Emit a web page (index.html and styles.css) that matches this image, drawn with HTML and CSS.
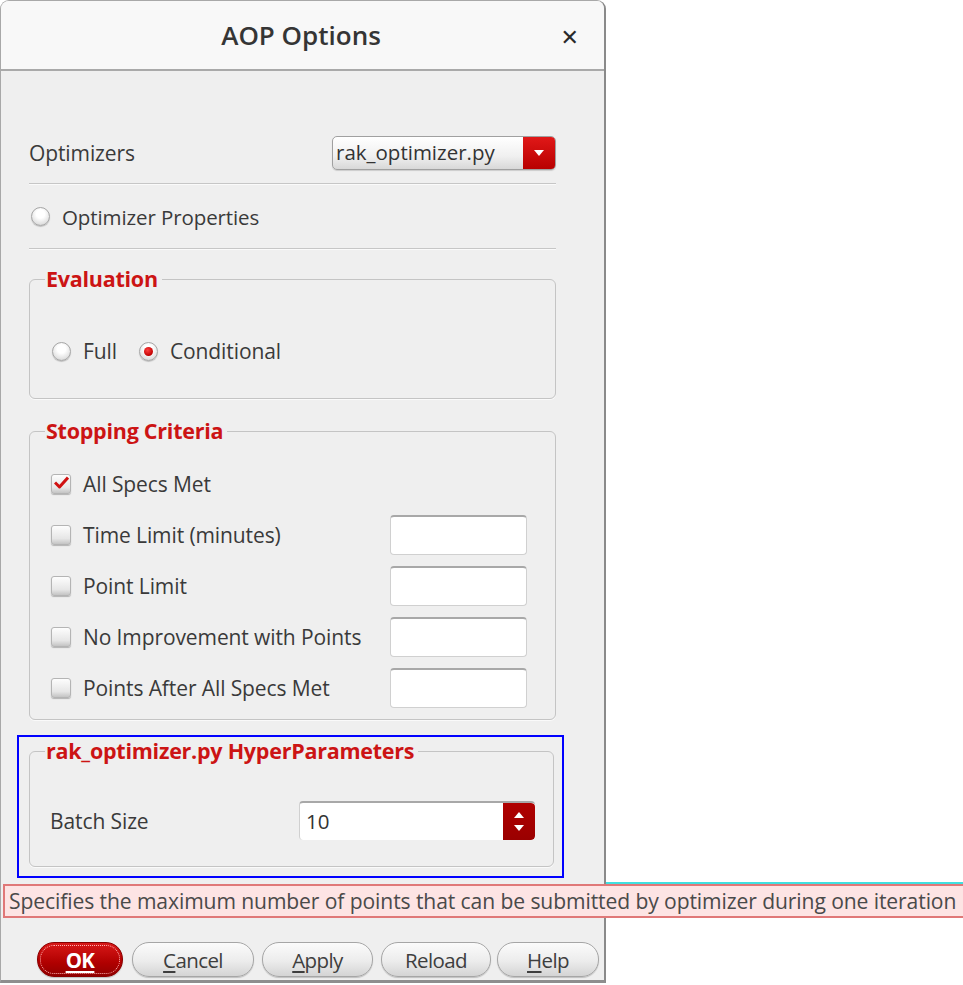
FILE: index.html
```html
<!DOCTYPE html>
<html>
<head>
<meta charset="utf-8">
<link rel="stylesheet" href="styles.css">
</head>
<body>
<div class="dialog">
  <div class="titlebar">
    <span class="title">AOP Options</span>
    <span class="close">&#x2715;</span>
  </div>
  <div class="content">
    <div class="row opt-row">
      <span class="label">Optimizers</span>
      <div class="combo">
        <span class="combo-text">rak_optimizer.py</span>
        <span class="combo-btn"><svg width="10" height="6" viewBox="0 0 10 6"><path d="M0 0 H10 L5 6 Z" fill="#fff"/></svg></span>
      </div>
    </div>
    <div class="sep sep1"></div>
    <div class="row prop-row">
      <span class="radio"></span>
      <span class="label">Optimizer Properties</span>
    </div>
    <div class="sep"></div>

    <fieldset class="group eval">
      <legend>Evaluation</legend>
      <div class="radios">
        <span class="radio"></span><span class="label">Full</span>
        <span class="radio checked"></span><span class="label">Conditional</span>
      </div>
    </fieldset>

    <fieldset class="group stop">
      <legend>Stopping Criteria</legend>
      <div class="crit">
        <span class="check checked"><svg width="15" height="13" viewBox="0 0 15 13"><path d="M1 6.5 L5.5 11 L14 1.5" fill="none" stroke="#d01010" stroke-width="3" stroke-linejoin="round"/></svg></span>
        <span class="label">All Specs Met</span>
      </div>
      <div class="crit">
        <span class="check"></span>
        <span class="label">Time Limit (minutes)</span>
        <span class="field"></span>
      </div>
      <div class="crit">
        <span class="check"></span>
        <span class="label">Point Limit</span>
        <span class="field"></span>
      </div>
      <div class="crit">
        <span class="check"></span>
        <span class="label">No Improvement with Points</span>
        <span class="field"></span>
      </div>
      <div class="crit">
        <span class="check"></span>
        <span class="label">Points After All Specs Met</span>
        <span class="field"></span>
      </div>
    </fieldset>

    <div class="highlight">
      <fieldset class="group hyper">
        <legend>rak_optimizer.py HyperParameters</legend>
        <div class="batch">
          <span class="label">Batch Size</span>
          <div class="spin">
            <span class="spin-text">10</span>
            <span class="spin-btn">
              <svg width="10" height="6" viewBox="0 0 10 6"><path d="M0 6 H10 L5 0 Z" fill="#fff"/></svg>
              <svg width="10" height="6" viewBox="0 0 10 6"><path d="M0 0 H10 L5 6 Z" fill="#fff"/></svg>
            </span>
          </div>
        </div>
      </fieldset>
    </div>

    <div class="buttons">
      <span class="btn ok"><u>OK</u></span>
      <span class="btn btn-cancel"><u>C</u>ancel</span>
      <span class="btn btn-apply"><u>A</u>pply</span>
      <span class="btn btn-reload">Reload</span>
      <span class="btn btn-help"><u>H</u>elp</span>
    </div>
  </div>
</div>
<div class="tooltip-edge"></div>
<div class="tooltip">Specifies the maximum number of points that can be submitted by optimizer during one iteration</div>
</body>
</html>
```

FILE: styles.css
```css
* { box-sizing: border-box; }
html, body { margin: 0; padding: 0; background: #ffffff; }
body {
  font-family: "Open Sans", "DejaVu Sans", sans-serif;
  color: #3a3a3a;
  width: 963px;
  height: 985px;
  overflow: hidden;
  position: relative;
}
.dialog {
  width: 606px;
  height: 983px;
  background: #efefef;
  border: 1px solid #a8a8a8;
  border-right: 2px solid #8a8a8a;
  border-bottom: 3px solid #8e8e8e;
  border-radius: 9px 9px 0 0;
  overflow: hidden;
}
.titlebar {
  height: 70px;
  background: #f8f8f8;
  border-bottom: 2px solid #a9a9a9;
  display: flex;
  align-items: center;
  justify-content: center;
  position: relative;
}
.title {
  font-size: 26px;
  font-weight: 600;
  color: #353535;
  margin-top: -1px;
  margin-left: -3px;
  letter-spacing: 0;
}
.close {
  position: absolute;
  right: 25px;
  top: 20px;
  font-size: 22px;
  font-weight: 700;
  color: #2a2a2a;
}
.content {
  padding: 65px 48px 0 28px;
}
.label {
  font-size: 21px;
  color: #3a3a3a;
  white-space: nowrap;
  letter-spacing: -0.1px;
}
.row { display: flex; align-items: center; }
.opt-row { height: 34px; justify-content: space-between; }
.combo {
  width: 224px;
  height: 34px;
  border: 1px solid #a0a0a0;
  border-radius: 5px;
  background: linear-gradient(#ffffff, #f0f0f0 60%, #d8d8d8);
  display: flex;
  overflow: hidden;
  box-shadow: 0 1px 1px rgba(0,0,0,0.15);
}
.combo-text {
  flex: 1;
  font-size: 20.5px;
  padding-left: 3px;
  line-height: 31px;
  color: #333;
  white-space: nowrap;
}
.combo-btn {
  width: 32px;
  background: linear-gradient(#e01818, #b80000);
  display: flex;
  align-items: center;
  justify-content: center;
}
.sep {
  height: 2px;
  border-top: 1px solid #c6c6c6;
  border-bottom: 1px solid #fafafa;
}
.sep1 { margin-top: 13px; }
.prop-row { height: 63px; padding-left: 2px; gap: 12px; }
.prop-row .label { font-size: 20.5px; }
.radio {
  width: 19px;
  height: 19px;
  border-radius: 50%;
  border: 1px solid #a6a6a6;
  background: radial-gradient(circle at 50% 35%, #ffffff 30%, #e2e2e2 70%, #bcbcbc);
  box-shadow: 0 1px 1px rgba(0,0,0,0.2);
  display: inline-flex;
  align-items: center;
  justify-content: center;
  flex: none;
}
.radio.checked::after {
  content: "";
  width: 9px;
  height: 9px;
  border-radius: 50%;
  background: radial-gradient(circle at 40% 35%, #ff4040, #c00000 70%);
}
.group {
  margin: 0;
  border: 1px solid #c4c4c4;
  border-radius: 6px;
  min-width: 0;
  box-shadow: 0 1px 0 #fafafa;
}
.group legend {
  font-size: 21.5px;
  font-weight: 700;
  color: #cc1414;
  padding: 0 4px 0 1px;
  line-height: 24px;
  height: 24px;
  letter-spacing: -0.25px;
  white-space: nowrap;
}
.eval {
  margin-top: 17px;
  padding: 48px 0 35px 22px;
}
.eval legend { margin-left: -7px; }
.radios {
  display: flex;
  align-items: center;
  height: 24px;
}
.radios .radio { margin-right: 12px; }
.radios .label { margin-right: 22px; }
.stop {
  margin-top: 20px;
  padding: 21px 28px 11px 21px;
  display: flex;
  flex-direction: column;
  gap: 11px;
}
.stop legend { margin-left: -6px; }
.crit {
  display: flex;
  align-items: center;
  height: 40px;
}
.crit .label { flex: 1; margin-left: 12px; }
.check {
  width: 20px;
  height: 20px;
  border: 1px solid #b4b4b4;
  border-radius: 3px;
  background: linear-gradient(#fdfdfd, #e6e6e6 70%, #c4c4c4);
  box-shadow: 0 1px 1px rgba(0,0,0,0.25);
  display: flex;
  align-items: center;
  justify-content: center;
  flex: none;
}
.check.checked svg { margin-top: -3px; }
.field {
  width: 137px;
  height: 40px;
  background: #ffffff;
  border: 1px solid #d0d0d0;
  border-top: 2px solid #a8a8a8;
  border-radius: 4px;
  flex: none;
}
.highlight {
  margin: 15px -8px 0 -12px;
  border: 2px solid #0000ff;
  padding: 2px 8px 9px 10px;
}
.hyper {
  padding: 38px 18px 26px 20px;
}
.hyper legend { margin-left: -5px; }
.batch {
  display: flex;
  align-items: center;
  justify-content: space-between;
  height: 39px;
}
.spin {
  width: 236px;
  height: 39px;
  display: flex;
  background: #fff;
  border-top: 2px solid #a8a8a8;
  border-left: 1px solid #d0d0d0;
  border-radius: 4px;
  overflow: hidden;
}
.spin-text {
  flex: 1;
  font-size: 20.5px;
  line-height: 36px;
  padding-left: 6px;
  color: #333;
}
.spin-btn {
  width: 32px;
  background: linear-gradient(#b00000, #9a0000);
  display: flex;
  flex-direction: column;
  align-items: center;
  justify-content: center;
  gap: 7px;
  border-radius: 0 4px 4px 0;
}
.buttons {
  margin-top: 64px;
  margin-right: -48px;
  display: flex;
  gap: 8px;
  padding-left: 8px;
}
.btn {
  flex: none;
  height: 35px;
  border-radius: 17px;
  border: 1px solid #a6a6a6;
  background: linear-gradient(#fbfbfb, #ececec 55%, #d4d4d4);
  box-shadow: 0 1px 1px rgba(0,0,0,0.2);
  display: flex;
  align-items: center;
  justify-content: center;
  font-size: 20.5px;
  color: #3e3e3e;
  letter-spacing: -0.6px;
}
.btn u { text-decoration-thickness: 2px; text-underline-offset: 3px; }
.ok {
  width: 86px;
  background: linear-gradient(#d81818, #b00000 60%, #900000);
  border: 1px solid #8a0000;
  color: #fff;
  font-weight: 700;
  outline: 1px dotted #ffb0b0;
  outline-offset: -4px;
}
.btn-cancel { width: 122px; margin-left: 1px; }
.btn-apply { width: 111px; }
.btn-reload { width: 110px; }
.btn-help { width: 102px; margin-left: -2px; }
.tooltip-edge {
  position: absolute;
  left: 606px;
  top: 882px;
  width: 357px;
  height: 2px;
  background: #40e0e0;
}
.tooltip {
  position: absolute;
  left: 3px;
  top: 884px;
  width: 970px;
  height: 34px;
  background: #fde4e4;
  border-top: 2px solid #e07878;
  border-bottom: 2px solid #e07878;
  border-left: 2px solid #e07878;
  font-size: 21.1px;
  line-height: 30px;
  padding-left: 4px;
  color: #4a4a4a;
  white-space: nowrap;
  letter-spacing: -0.1px;
}
```
